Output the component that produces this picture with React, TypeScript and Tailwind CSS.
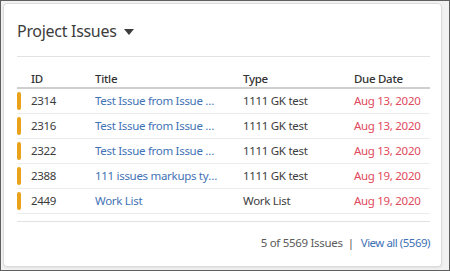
const issues = [
  { id: "2314", title: "Test Issue from Issue Creation Wizard", type: "1111 GK test", due: "Aug 13, 2020" },
  { id: "2316", title: "Test Issue from Issue Creation Wizard", type: "1111 GK test", due: "Aug 13, 2020" },
  { id: "2322", title: "Test Issue from Issue Creation Wizard", type: "1111 GK test", due: "Aug 13, 2020" },
  { id: "2388", title: "111 issues markups type test", type: "1111 GK test", due: "Aug 19, 2020" },
  { id: "2449", title: "Work List", type: "Work List", due: "Aug 19, 2020" },
];

const cols = "grid grid-cols-[78px_148px_111px_1fr]";

export default function App() {
  return (
    <div
      className="w-[450px] h-[271px] border border-[#5f5f5f] bg-[#f2f2f2] pt-[2px] pl-[2px] pr-[7px] pb-[3px]"
      style={{ fontFamily: '"Noto Sans", sans-serif' }}
    >
      <div className="h-full bg-white rounded-[4px] border border-[#dcdcdc] shadow-[0_1px_2px_rgba(0,0,0,0.08)] pl-[13px] pr-[11px] pt-[17px]">
        <div className="flex items-center gap-[7px] h-[20px]">
          <span className="text-[16px] text-[#3c3c3c] tracking-[-0.3px]">Project Issues</span>
          <svg width="10" height="6" viewBox="0 0 10 6" className="mt-[1px]">
            <path d="M0 0 L10 0 L5 6 Z" fill="#3c3c3c" />
          </svg>
        </div>
        <div className="mt-[15px] border-t border-[#e2e2e2]" />
        <div className="text-[11.5px] tracking-[-0.3px]">
          <div className={`${cols} h-[32px] pt-[14px] leading-[16px] border-b-2 border-[#cfcfcf] text-[#333] font-medium`}>
            <span className="pl-[14px]">ID</span>
            <span>Title</span>
            <span>Type</span>
            <span>Due Date</span>
          </div>
          {issues.map((it) => (
            <div key={it.id} className={`${cols} h-[25px] items-center border-b border-[#ececec]`}>
              <div className="flex items-center gap-[10px]">
                <span className="w-[4px] h-[18px] rounded-[2px] bg-[#e9a21a]" />
                <span className="text-[#3c3c3c]">{it.id}</span>
              </div>
              <span className="pr-[23px] text-[#3f72b5] truncate">{it.title}</span>
              <span className="text-[#3c3c3c]">{it.type}</span>
              <span className="text-[#e04a5c]">{it.due}</span>
            </div>
          ))}
        </div>
        <div className="mt-[7px] border-t border-[#e2e2e2]" />
        <div className="flex justify-end items-center mt-[13px] text-[11.5px] leading-[16px] tracking-[-0.3px]">
          <span className="text-[#5a5a5a]">5 of 5569 Issues</span>
          <span className="text-[#5a5a5a] ml-[5px] mr-[7px]">|</span>
          <span className="text-[#3f72b5] tracking-[-0.5px]">View all (5569)</span>
        </div>
      </div>
    </div>
  );
}
